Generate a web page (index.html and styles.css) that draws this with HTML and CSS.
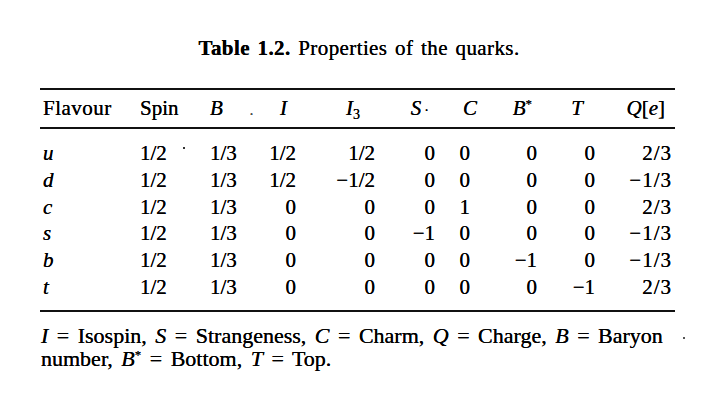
FILE: index.html
```html
<!DOCTYPE html>
<html>
<head>
<meta charset="utf-8">
<link rel="stylesheet" href="styles.css">
</head>
<body>
<div class="page">
  <h1 class="title"><b>Table 1.2.</b> Properties of the quarks.</h1>
  <div class="tbl">
    <div class="row head">
      <div>Flavour</div>
      <div>Spin</div>
      <div><i>B</i><span class="spk">.</span></div>
      <div><i>I</i></div>
      <div><i>I</i><sub>3</sub></div>
      <div><i>S</i><span class="mid">·</span></div>
      <div><i>C</i></div>
      <div><i>B</i><sup>*</sup></div>
      <div><i>T</i></div>
      <div><i>Q</i>[<i>e</i>]</div>
    </div>
    <div class="body">
      <div class="row"><div><i>u</i></div><div>1/2<span class="dot"></span></div><div>1/3</div><div>1/2</div><div>1/2</div><div>0</div><div>0</div><div>0</div><div>0</div><div>2/3</div></div>
      <div class="row"><div><i>d</i></div><div>1/2</div><div>1/3</div><div>1/2</div><div>−1/2</div><div>0</div><div>0</div><div>0</div><div>0</div><div>−1/3</div></div>
      <div class="row"><div><i>c</i></div><div>1/2</div><div>1/3</div><div>0</div><div>0</div><div>0</div><div>1</div><div>0</div><div>0</div><div>2/3</div></div>
      <div class="row"><div><i>s</i></div><div>1/2</div><div>1/3</div><div>0</div><div>0</div><div>−1</div><div>0</div><div>0</div><div>0</div><div>−1/3</div></div>
      <div class="row"><div><i>b</i></div><div>1/2</div><div>1/3</div><div>0</div><div>0</div><div>0</div><div>0</div><div>−1</div><div>0</div><div>−1/3</div></div>
      <div class="row"><div><i>t</i></div><div>1/2</div><div>1/3</div><div>0</div><div>0</div><div>0</div><div>0</div><div>0</div><div>−1</div><div>2/3</div></div>
    </div>
  </div>
  <p class="note"><i>I</i> = Isospin, <i>S</i> = Strangeness, <i>C</i> = Charm, <i>Q</i> = Charge, <i>B</i> = Baryon<span class="speck s1"></span><br>number, <i>B</i><sup>*</sup> = Bottom, <i>T</i> = Top.</p>
</div>
</body>
</html>
```

FILE: styles.css
```css
body {
  margin: 0;
  background: #fff;
  color: #000;
  font-family: "Liberation Serif", "Times New Roman", serif;
}

.page {
  width: 718px;
  height: 412px;
  position: relative;
  overflow: hidden;
}

.title {
  margin: 0;
  padding-top: 36px;
  text-align: center;
  font-size: 21px;
  font-weight: normal;
  line-height: 24px;
  word-spacing: 2px;
  letter-spacing: 0.4px;
  text-shadow: 0 0 0.6px #000;
}

.title b {
  font-weight: bold;
}

.tbl {
  margin: 28px 0 0 40px;
  width: 635px;
  border-top: 2px solid #111;
  border-bottom: 2px solid #111;
  font-size: 21px;
  text-shadow: 0 0 0.4px #000;
}

.row {
  display: grid;
  grid-template-columns: 100px 65px 55px 40px 78px 62px 40px 60px 60px 75px;
  height: 26.8px;
  line-height: 26.8px;
  white-space: nowrap;
}

.row > div {
  text-align: right;
}

.row > div:nth-child(1) { text-align: left; padding-left: 3px; }
.row > div:nth-child(2) { text-align: left; }
.row > div:nth-child(3) { text-align: left; padding-left: 5px; }
.row > div:nth-child(4) { padding-right: 4px; }
.row > div:nth-child(5) { padding-right: 3px; }
.row > div:nth-child(6) { padding-right: 5px; }
.row > div:nth-child(7) { padding-right: 10px; }
.row > div:nth-child(8) { padding-right: 3px; }
.row > div:nth-child(9) { padding-right: 5px; }
.row > div:nth-child(10) { padding-right: 3px; letter-spacing: 1px; }

.head {
  height: 37px;
  line-height: 37px;
  border-bottom: 2px solid #111;
}

.head > div:nth-child(1) { letter-spacing: 0.5px; }
.head > div:nth-child(4) { padding-right: 13px; }
.head > div:nth-child(5) { padding-right: 18px; }
.head > div:nth-child(6) { padding-right: 11px; }
.head > div:nth-child(7) { padding-right: 3px; }
.head > div:nth-child(8) { padding-right: 8px; }
.head > div:nth-child(9) { padding-right: 17px; }
.head > div:nth-child(10) { padding-right: 10px; letter-spacing: 0; }

.head sub {
  font-size: 14px;
  vertical-align: -4px;
  line-height: 0;
}

sup {
  font-size: 13px;
  vertical-align: 7px;
  line-height: 0;
}

.spk {
  margin-left: 27px;
  font-size: 14px;
  color: #555;
}

.mid {
  margin-left: 3px;
  font-size: 14px;
}

.body {
  padding: 11px 0 9px;
}

.dot {
  display: inline-block;
  width: 2px;
  height: 2px;
  background: #333;
  margin-left: 16px;
  vertical-align: 11px;
}

.note {
  margin: 12px 0 0 41px;
  font-size: 22px;
  line-height: 23.5px;
  white-space: nowrap;
  word-spacing: 3px;
  text-shadow: 0 0 0.4px #000;
}

.speck {
  display: inline-block;
  width: 2px;
  height: 2px;
  background: #555;
}

.s1 {
  margin-left: 20px;
  vertical-align: 4px;
}
```
